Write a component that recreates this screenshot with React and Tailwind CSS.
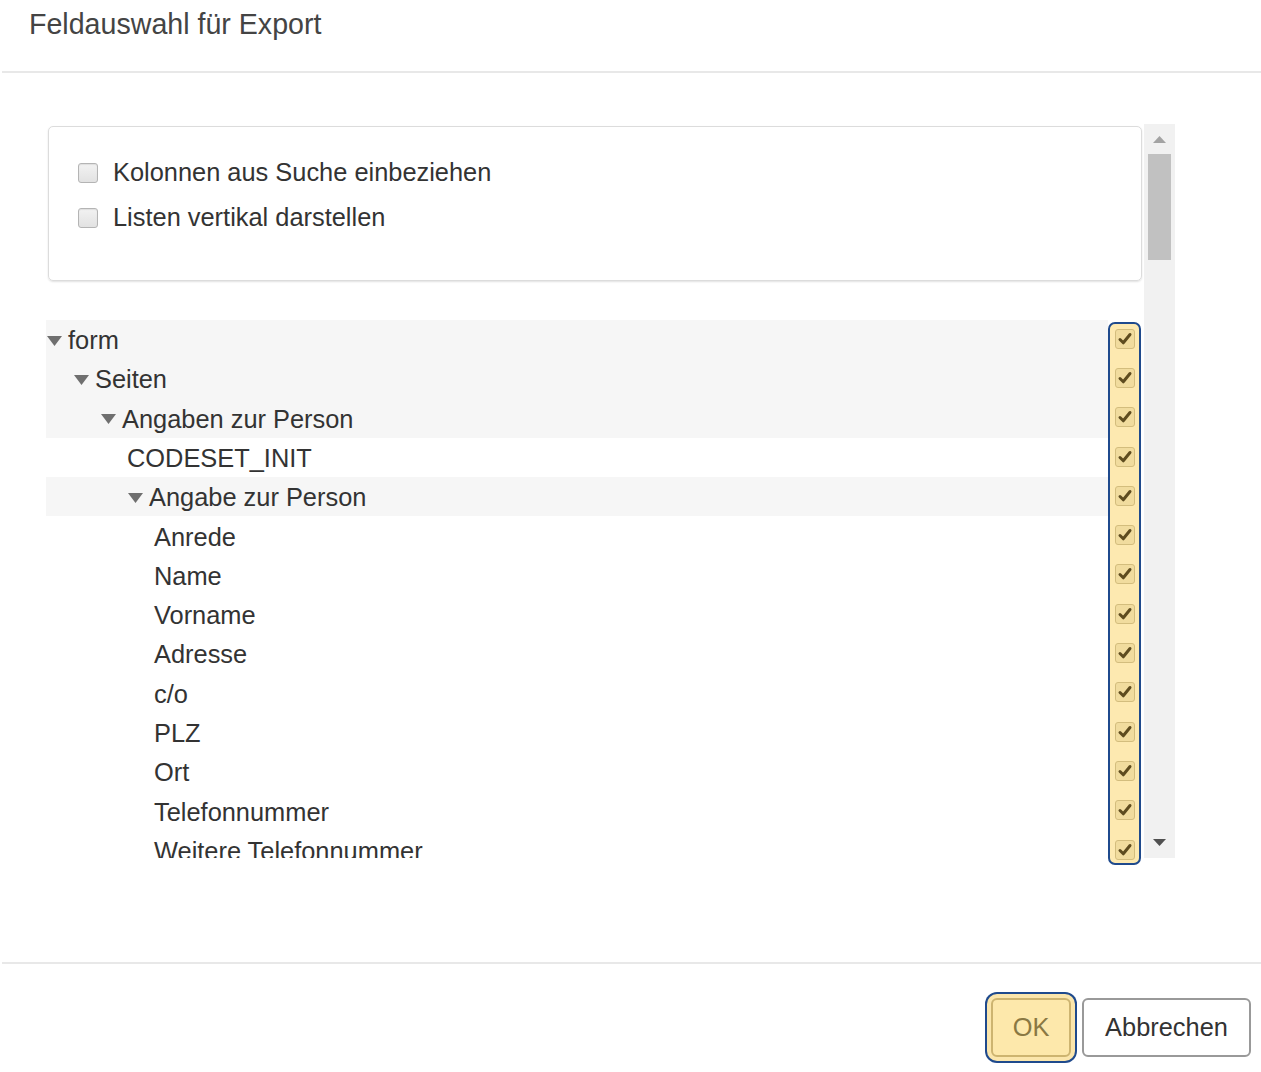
const TREE = [
  { label: 'form', pad: 'pl-[1px]', open: true },
  { label: 'Seiten', pad: 'pl-[28px]', open: true },
  { label: 'Angaben zur Person', pad: 'pl-[55px]', open: true },
  { label: 'CODESET_INIT', pad: 'pl-[81px]' },
  { label: 'Angabe zur Person', pad: 'pl-[82px]', open: true },
  { label: 'Anrede', pad: 'pl-[108px]' },
  { label: 'Name', pad: 'pl-[108px]' },
  { label: 'Vorname', pad: 'pl-[108px]' },
  { label: 'Adresse', pad: 'pl-[108px]' },
  { label: 'c/o', pad: 'pl-[108px]' },
  { label: 'PLZ', pad: 'pl-[108px]' },
  { label: 'Ort', pad: 'pl-[108px]' },
  { label: 'Telefonnummer', pad: 'pl-[108px]' },
  { label: 'Weitere Telefonnummer', pad: 'pl-[108px]' },
];

function Caret() {
  return (
    <svg width="15" height="11" viewBox="0 0 15 11" className="shrink-0 mr-[6px]">
      <polygon points="0,1 15,1 7.5,11" fill="#6f6f6f" />
    </svg>
  );
}

function PlainCheckbox() {
  return (
    <span className="w-[20px] h-[20px] rounded-[3px] border border-[#b4b4b4] bg-gradient-to-b from-[#f2f2f2] to-[#e2e2e2] shadow-[inset_0_1px_1px_rgba(0,0,0,0.08)] shrink-0" />
  );
}

function YellowCheck() {
  return (
    <span className="w-[20px] h-[20px] rounded-[3px] border border-[#d3bd7d] bg-[#f1dc9e] flex items-center justify-center">
      <svg width="16" height="16" viewBox="0 0 16 16">
        <path d="M3 8.5 L6.3 11.8 L13 3.5" fill="none" stroke="#5e4c1f" strokeWidth="3" strokeLinecap="round" strokeLinejoin="round" />
      </svg>
    </span>
  );
}

export default function App() {
  return (
    <div className="w-[1261px] h-[1072px] bg-white flex flex-col text-[#333] font-['Liberation_Sans',Arial,sans-serif] overflow-hidden">
      {/* Header */}
      <div className="h-[71px] pt-[7px] pl-[29px]">
        <h1 className="text-[28.6px] leading-[34px] text-[#444]">Feldauswahl für Export</h1>
      </div>
      <div className="ml-[2px] border-t-2 border-[#e8e8e8]" />

      {/* Body */}
      <div className="h-[889px] pt-[51px] pl-[46px]">
        <div className="flex">
          <div className="w-[1098px]">
            {/* Options */}
            <div className="mt-[2px] ml-[2px] w-[1094px] h-[155px] border border-[#dcdcdc] rounded-[5px] shadow-[0_1px_2px_rgba(0,0,0,0.12)] pt-[23px] pl-[29px]">
              <label className="h-[45px] flex items-center gap-[15px] text-[25.4px]">
                <PlainCheckbox />
                <span>Kolonnen aus Suche einbeziehen</span>
              </label>
              <label className="h-[45px] flex items-center gap-[15px] text-[25.4px]">
                <PlainCheckbox />
                <span>Listen vertikal darstellen</span>
              </label>
            </div>

            {/* Tree */}
            <div className="mt-[39px] flex items-start">
              <div className="w-[1062px] h-[538px] overflow-hidden">
                {TREE.map((row) => (
                  <div
                    key={row.label}
                    className={`h-[39.3px] pt-[1px] flex items-center text-[25.4px] ${row.pad} ${row.open ? 'bg-[#f6f6f6]' : ''}`}
                  >
                    {row.open && <Caret />}
                    <span className="whitespace-nowrap">{row.label}</span>
                  </div>
                ))}
              </div>
              <div className="w-[33px] h-[543px] mt-[2px] border-2 border-[#1f4a8d] rounded-[7px] bg-[#fde9b0] overflow-hidden">
                <div className="-mt-[5px]">
                  {TREE.map((row) => (
                    <div key={row.label} className="h-[39.3px] flex items-center justify-center">
                      <YellowCheck />
                    </div>
                  ))}
                </div>
              </div>
            </div>
          </div>

          {/* Scrollbar */}
          <div className="w-[31px] h-[734px] bg-[#f1f1f1] flex flex-col items-center">
            <div className="h-[30px] flex items-center justify-center">
              <svg width="13" height="7" viewBox="0 0 13 7">
                <polygon points="0,7 13,7 6.5,0" fill="#a3a3a3" />
              </svg>
            </div>
            <div className="w-[23px] h-[106px] bg-[#c1c1c1]" />
            <div className="flex-1" />
            <div className="h-[32px] flex items-center justify-center">
              <svg width="13" height="7" viewBox="0 0 13 7">
                <polygon points="0,0 13,0 6.5,7" fill="#505050" />
              </svg>
            </div>
          </div>
        </div>
      </div>

      {/* Footer */}
      <div className="ml-[2px] border-t-2 border-[#e8e8e8]" />
      <div className="flex justify-end items-start pt-[34px] pr-[10px] gap-[11px]">
        <button className="w-[80px] h-[59px] rounded-[6px] border-2 border-[#cdb470] bg-[#fde8ab] text-[25.4px] text-[#8a7843] shadow-[0_0_0_4px_#fbe6ac,0_0_0_6px_#1f4a8d]">
          OK
        </button>
        <button className="w-[169px] h-[59px] rounded-[6px] border-2 border-[#999] bg-white text-[25.4px] text-[#333]">
          Abbrechen
        </button>
      </div>
    </div>
  );
}
